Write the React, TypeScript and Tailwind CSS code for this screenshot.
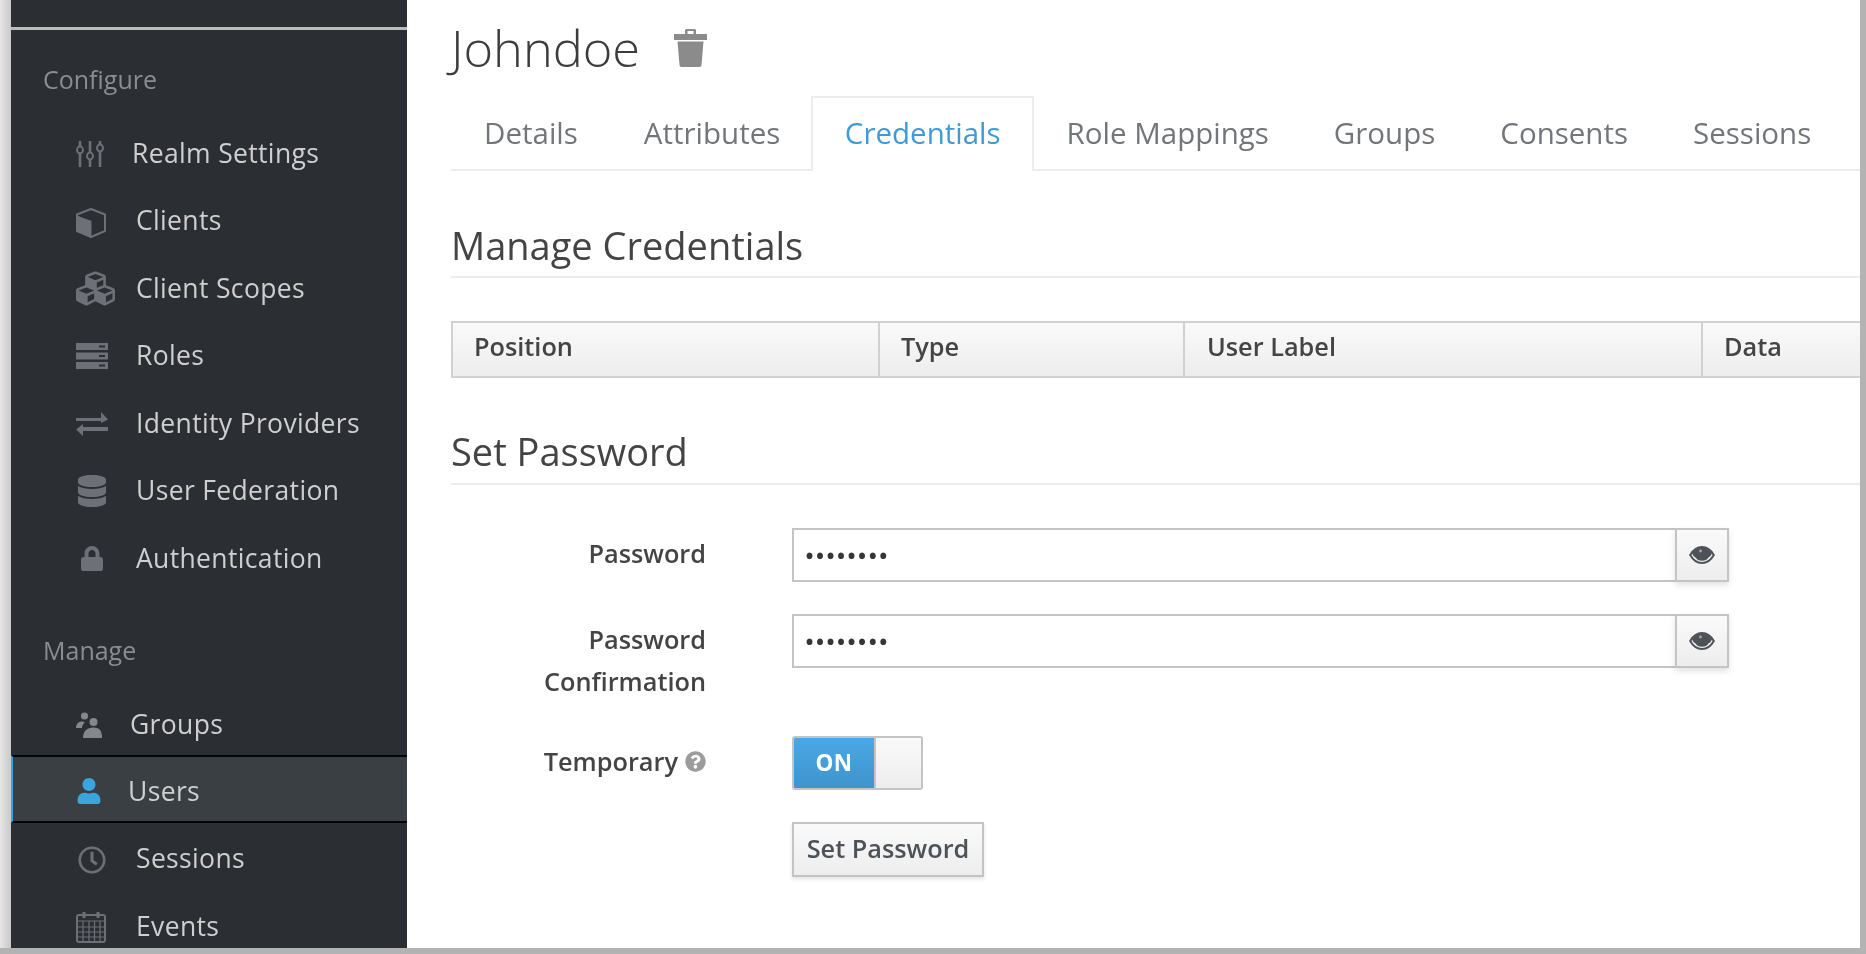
import React from "react";
import { FaCubes, FaDatabase, FaLock, FaUser, FaRegClock, FaQuestionCircle } from "react-icons/fa";

const iconColor = "text-[#6d7177]";

function Sliders() {
  return (
    <svg viewBox="0 0 28 28" className="w-[28px] h-[28px]" fill="none" stroke="#6d7177">
      <g strokeWidth="2.6">
        <path d="M4 1v6M4 13v14M14 1v12M14 19v8M24 1v4M24 11v16" />
      </g>
      <g strokeWidth="2" fill="#2b2e33">
        <ellipse cx="4" cy="10" rx="3" ry="3.4" />
        <ellipse cx="14" cy="16" rx="3" ry="3.4" />
        <ellipse cx="24" cy="8" rx="3" ry="3.4" />
      </g>
    </svg>
  );
}
function Cube() {
  return (
    <svg viewBox="0 0 30 30" className="w-[30px] h-[30px] mt-[3px]">
      <path d="M15 1 29 6.500V23L15 29 1 23V6.500z" fill="none" stroke="#6d7177" strokeWidth="2" strokeLinejoin="round" />
      <path d="M1 7.500 15.500 13V29L1 23z" fill="#6d7177" />
    </svg>
  );
}
function Server() {
  return (
    <svg viewBox="0 0 32 26" className="w-[32px] h-[26px]">
      <g fill="#6d7177">
        <rect x="0" y="0" width="32" height="7" />
        <rect x="0" y="9.5" width="32" height="7" />
        <rect x="0" y="19" width="32" height="7" />
      </g>
      <g fill="#2b2e33">
        <rect x="23" y="2.5" width="6" height="2" />
        <rect x="23" y="12" width="6" height="2" />
        <rect x="23" y="21.5" width="6" height="2" />
      </g>
    </svg>
  );
}
function Exchange() {
  return (
    <svg viewBox="0 0 32 24" className="w-[32px] h-[24px]" fill="#6d7177">
      <path d="M0 6h25V0l7 7.500-7 3.500V9H0z" />
      <path d="M32 15H7v-3L0 17.500 7 24v-5h25z" />
    </svg>
  );
}
function People() {
  return (
    <svg viewBox="0 0 26 26" className="w-[26px] h-[26px]" fill="#85878a">
      <circle cx="8.500" cy="4" r="3.600" />
      <path d="M0 16c0-4 2.500-6.500 6-6.500 1.200 0 2.200.3 3 .8-2 1.600-3 3.500-3 5.700z" />
      <circle cx="17.500" cy="10" r="4" />
      <path d="M7 26c0-7 4-10.500 10.500-10.500S26 19 26 26z" />
    </svg>
  );
}
function Calendar() {
  return (
    <svg viewBox="0 0 30 32" className="w-[30px] h-[32px]" fill="none" stroke="#6d7177">
      <rect x="1" y="4" width="28" height="27" rx="2" strokeWidth="2" />
      <path d="M1 10h28M1 16h28M1 21h28M1 26h28M7 10v21M13 10v21M18.500 10v21M24 10v21" strokeWidth="1.200" />
      <path d="M8 1v6M22 1v6" strokeWidth="3" />
    </svg>
  );
}
function Trash() {
  return (
    <svg viewBox="0 0 33 38" className="w-[33px] h-[38px]" fill="#8b8b8b">
      <path d="M11 5V1.500C11 .7 11.700 0 12.500 0h8C21.300 0 22 .7 22 1.500V5h11v6H0V5zm2.500-3v3h6V2z" />
      <path d="M3.500 12.500h26L27.500 36c0 1.200-1 2-2 2h-18c-1 0-2-.8-2-2z" />
    </svg>
  );
}
function Eye() {
  return (
    <svg viewBox="0 0 26 18" className="w-[26px] h-[18px]">
      <path d="M1.200 9C4 4 8 1 13 1s9 3 11.800 8C22 14 18 17 13 17S4 14 1.200 9z" fill="#f2f2f2" stroke="#4d5258" strokeWidth="2" />
      <path d="M3 7.500C5.500 3.500 9 1.500 13 1.500s7.500 2 10 6c-1 2-2 3-3.500 4C18.500 13.500 16 14.800 13 14.800S7.500 13.500 6.500 11.500C5 10.500 4 9.500 3 7.500z" fill="#4d5258" />
      <circle cx="11.500" cy="5" r="1.400" fill="#a8a8a8" />
    </svg>
  );
}

const configure = [
  { label: "Realm Settings", icon: <Sliders />, box: "w-[56px]" },
  { label: "Clients", icon: <Cube />, box: "w-[60px]" },
  { label: "Client Scopes", icon: <FaCubes className={`w-[39px] h-[39px] ${iconColor}`} />, box: "w-[60px]" },
  { label: "Roles", icon: <Server />, box: "w-[60px]" },
  { label: "Identity Providers", icon: <Exchange />, box: "w-[60px]" },
  { label: "User Federation", icon: <FaDatabase className={`w-[30px] h-[32px] ${iconColor}`} />, box: "w-[60px]", pad: "pl-[1px]" },
  { label: "Authentication", icon: <FaLock className={`w-[22px] h-[25px] ${iconColor}`} />, box: "w-[60px]", pad: "pl-[5px]" },
];

const navText = "text-[26.500px] tracking-[0.35px] text-[#cfcfcf]";

function NavItem({ label, icon, box, pad = "" }: { label: string; icon: React.ReactNode; box: string; pad?: string }) {
  return (
    <div className={`flex items-center h-[67.5px] pl-[65px] ${navText}`}>
      <div className={`${box} ${pad} shrink-0 flex items-center`}>{icon}</div>
      <span>{label}</span>
    </div>
  );
}

function PasswordRow() {
  return (
    <div className="flex">
      <div className="w-[885px] h-[54px] border-2 border-[#c4c4c4] bg-white flex items-center pl-[11px] text-[#363636]">
        <span className="text-[24px] leading-none tracking-[1.500px]">••••••••</span>
      </div>
      <div className="w-[54px] h-[54px] -ml-[2px] border-2 border-[#c4c4c4] bg-gradient-to-b from-[#fafafa] to-[#ededed] flex items-center justify-center shadow-[0_3px_6px_rgba(0,0,0,0.12)]">
        <Eye />
      </div>
    </div>
  );
}

export default function App() {
  return (
    <div
      className="w-[1866px] h-[954px] overflow-hidden bg-[#b3b3b3] blur-[0.7px]"
      style={{ fontFamily: '"Open Sans", "Noto Sans", sans-serif' }}
    >
      <div className="flex h-[948px] w-[1860px] bg-white">
        <div className="w-[11px] shrink-0 bg-gradient-to-r from-[#e6e6e6] to-[#c9c9c9]" />
        <aside className="w-[396px] shrink-0 bg-[#2b2e33] overflow-hidden">
          <div className="h-[27px]" />
          <div className="h-[3px] bg-[#b9bbbd]" />
          <div className="pt-[30px] pl-[32px] h-[88px] text-[25px] leading-[38px] text-[#8b8d8f]">Configure</div>
          <div className="mt-[2px]">
            {configure.map((c) => (
              <NavItem key={c.label} {...c} />
            ))}
          </div>
          <div className="h-[58px] pt-[28px] mb-[6px] mt-[10px] pl-[32px] text-[25px] leading-[38px] text-[#8b8d8f]">Manage</div>
          <div className={`flex items-center h-[60px] pl-[65px] mt-[34px] ${navText}`}>
            <div className="w-[54px] shrink-0"><People /></div>
            <span>Groups</span>
          </div>
          <div className={`flex items-center h-[68px] pl-[64px] pt-[4px] border-y-2 border-[#050505] border-l-[2px] border-l-[#39a5dc] bg-[#3a3f44] ${navText}`}>
            <div className="w-[51px] shrink-0"><FaUser className="w-[24px] h-[26px] text-[#39a5dc]" /></div>
            <span className="mt-[3px]">Users</span>
          </div>
          <div className={`flex items-center h-[67.5px] mt-[3px] pl-[65px] ${navText}`}>
            <div className="w-[60px] shrink-0 pl-[2px]"><FaRegClock className={`w-[28px] h-[28px] mt-[2px] ${iconColor}`} /></div>
            <span>Sessions</span>
          </div>
          <div className={`flex items-center h-[67.5px] pl-[65px] ${navText}`}>
            <div className="w-[60px] shrink-0"><Calendar /></div>
            <span>Events</span>
          </div>
        </aside>
        <main className="flex-1 min-w-0 overflow-hidden pl-[44px] text-[#444444]">
          <div className="flex items-center h-[96px]">
            <h1 className="text-[50.500px] font-light leading-none text-[#3c3c3c]">Johndoe</h1>
            <div className="ml-[34px]"><Trash /></div>
          </div>
          <div className="flex h-[75px] border-b-2 border-[#ededed] text-[29.500px] text-[#72767b] items-stretch">
            <div className="flex items-center pl-[33px] pr-[33px] pt-[2px]">Details</div>
            <div className="flex items-center pl-[33px] pr-[31px] pt-[2px]">Attributes</div>
            <div className="flex items-center px-[31.500px] pb-[2px] h-[75px] border-2 border-b-0 border-[#ededed] bg-white text-[#3f9bd6]">Credentials</div>
            {["Role Mappings", "Groups", "Consents", "Sessions"].map((t) => (
              <div key={t} className="flex items-center px-[32.500px] pt-[2px]">{t}</div>
            ))}
          </div>
          <h2 className="mt-[50px] h-[57px] text-[38px] leading-[48px] text-[#444444] border-b-2 border-[#ededed]">Manage Credentials</h2>
          <div className="mt-[43px] flex h-[57px] border-2 border-r-0 border-[#d1d1d1] bg-gradient-to-b from-[#fafafa] to-[#ededed] text-[25.300px] font-semibold text-[#444444]">
            <div className="w-[427px] pl-[21px] flex items-center pb-[5px] border-r-2 border-[#d1d1d1]">Position</div>
            <div className="w-[305px] pl-[21px] flex items-center pb-[5px] border-r-2 border-[#d1d1d1]">Type</div>
            <div className="w-[518px] pl-[22px] flex items-center pb-[5px] border-r-2 border-[#d1d1d1]">User Label</div>
            <div className="flex-1 pl-[21px] flex items-center pb-[5px]">Data</div>
          </div>
          <h2 className="mt-[50px] h-[57px] text-[38px] leading-[46px] text-[#444444] border-b-2 border-[#ededed]">Set Password</h2>

          <div className="mt-[43px] grid grid-cols-[255px_1fr] gap-x-[86px] text-[25.300px] font-semibold text-[#444444]">
            <div className="h-[54px] flex items-center justify-end pb-[3px] text-right">Password</div>
            <PasswordRow />
            <div className="mt-[32px] h-[104px] text-right leading-[42px] pt-[4px]">Password<br />Confirmation</div>
            <div className="mt-[32px]"><PasswordRow /></div>
            <div className="mt-[18px] h-[54px] flex items-center justify-end pb-[3px]">
              <span>Temporary</span>
              <FaQuestionCircle className="ml-[7px] w-[21px] h-[21px] text-[#9c9c9c]" />
            </div>
            <div className="mt-[18px] flex w-[131px] h-[54px] border-2 border-[#c4c4c4] rounded-[3px] overflow-hidden">
              <div className="w-[80px] bg-gradient-to-b from-[#4aa8e6] to-[#3f94cc] text-white flex items-center justify-center text-[22.500px] font-bold tracking-[0.5px]">ON</div>
              <div className="flex-1 bg-gradient-to-b from-[#fafafa] to-[#ededed] border-l-2 border-[#c4c4c4]" />
            </div>
            <div className="mt-[32px]" />
            <div className="mt-[32px] w-[192px] h-[55px] border-2 border-[#c4c4c4] bg-gradient-to-b from-[#fafafa] to-[#ededed] flex items-center justify-center pb-[2px] text-[#4d5258] shadow-[0_2px_4px_rgba(0,0,0,0.12)]">Set Password</div>
          </div>
        </main>
      </div>
    </div>
  );
}
